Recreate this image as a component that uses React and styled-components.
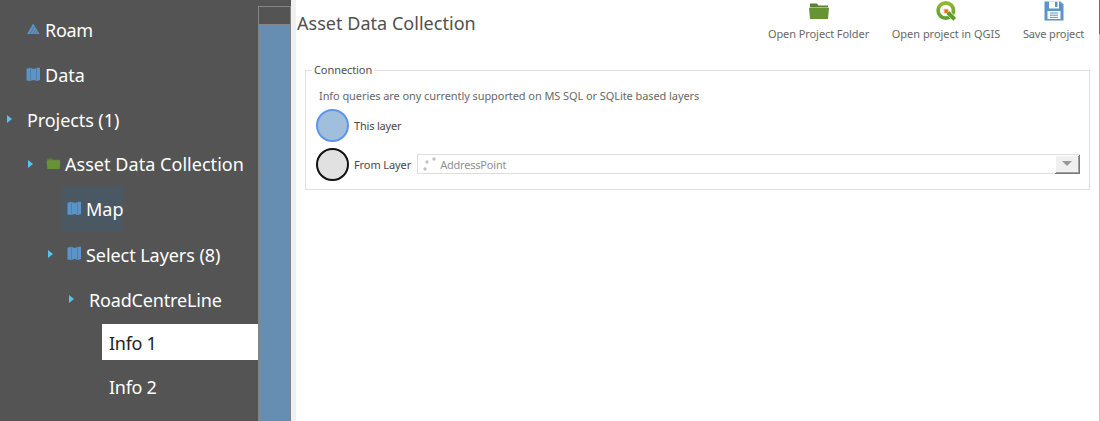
import React from "react";
import styled, { createGlobalStyle } from "styled-components";

const Global = createGlobalStyle`
  * { box-sizing: border-box; }
  body { margin: 0; background: #fff; font-family: "Noto Sans", "Open Sans", sans-serif; }
`;
const Window = styled.div`
  display: flex; width: 1100px; height: 421px; overflow: hidden; background: #fff;
`;
const Tree = styled.nav`
  width: 258px; height: 421px; padding-top: 7px; background: #545454; flex: none; overflow: hidden;
`;
const Row = styled.div`
  display: flex; align-items: center; height: ${p => p.$h || 45}px; padding-left: ${p => p.$indent}px;
`;
const Arrow = styled.span`
  width: 0; height: 0; margin-right: ${p => p.$gap}px; margin-top: -1px;
  border: solid transparent; border-width: 4.5px 0 4.5px 5px; border-left-color: #56c5ee;
`;
const Entry = styled.div`
  display: flex; align-items: center; height: 45px; width: ${p => (p.$hover ? "61px" : "auto")};
  padding-left: ${p => (p.$hover ? 5 : 0)}px; background: ${p => (p.$hover ? "#4a5863" : "transparent")};
  svg { flex: none; margin: -1px 4px 0 0; }
`;
const Label = styled.span`
  font-size: 18px; line-height: 24px; margin-top: ${p => (p.$raised ? -1 : 1)}px; color: #fff; white-space: nowrap;
  letter-spacing: ${p => p.$track || 0}px;
`;
const Selected = styled.div`
  display: flex; align-items: center; width: 157px; height: 36px; padding-left: 7px; background: #fff;
  ${Label} { color: #222; }
`;
const Scrollbar = styled.div`
  width: 33px; height: 421px; flex: none; padding-top: 6px; background: #545454;
  display: flex; flex-direction: column;
`;
const ScrollCap = styled.div`
  height: 18px; border: 1px solid #858585; border-bottom: 0;
`;
const ScrollThumb = styled.div`
  flex: 1; background: #668db2; border: 1px solid #858585; border-width: 1px 1px 0;
`;
const Gutter = styled.div`
  width: 5px; flex: none; background: #f0f0f0;
`;
const Main = styled.main`
  flex: 1; min-width: 0; height: 421px; display: flex; flex-direction: column;
`;
const Edge = styled.div`
  width: 1px; flex: none; background: linear-gradient(#6c6c6c 34px, #c8c8c8 34px);
`;
const Header = styled.header`
  display: flex; justify-content: space-between; height: 63px; padding: 0 15px 0 1px;
`;
const Title = styled.h1`
  margin: 11px 0 0; font-size: 18px; line-height: 25px; font-weight: 400; color: #505050; letter-spacing: 0.03px;
`;
const Actions = styled.div`
  display: flex; gap: 23px;
`;
const Action = styled.div`
  display: flex; flex-direction: column; align-items: center; width: ${p => p.$w}px;
  svg { display: block; height: 22px; width: 22px; }
`;
const Small = styled.span`
  font-size: 11px; line-height: 16px; white-space: nowrap; color: ${p => p.$color || "#686868"};
  letter-spacing: ${p => p.$track ?? -0.08}px;
`;
const ActionText = styled(Small)`
  margin-top: 4px;
`;
const Group = styled.fieldset`
  margin: 0 9px; padding: 0 9px 0 10px; height: 127px; min-width: 0; border: 1px solid #e1e1e1;
`;
const Legend = styled.legend`
  padding: 0 2px; margin-left: -4px; height: 14px; display: flex; align-items: center;
`;
const Hint = styled.div`
  height: 32px; padding: 11px 0 0 3px; display: flex;
`;
const Option = styled.div`
  display: flex; align-items: center; height: ${p => p.$h}px;
`;
const Radio = styled.span`
  width: 33px; height: 33px; flex: none; border-radius: 50%; margin-right: 5px;
  border: 2px solid ${p => (p.$on ? "#5f93f0" : "#111")}; background: ${p => (p.$on ? "#9fbfdc" : "#e1e1e1")};
`;
const Combo = styled.div`
  display: flex; align-items: center; flex: 1; height: 20px; margin: -1px 0 0 6px; padding-left: 4px;
  border: 1px solid #dedede; border-right: 0;
  svg { margin-right: 2px; }
  ${Small} { margin-top: 2px; }
`;
const DropButton = styled.span`
  width: 25px; height: 19px; margin: 0 0 0 auto; background: #f0f0f0; display: flex; align-items: center; justify-content: center;
  border: solid #777; border-width: 0 1px 1px 0; box-shadow: inset 1px 1px #fff, inset -1px -1px #a0a0a0;
  &::after { content: ""; border: solid transparent; border-width: 5px 5px 0; border-top-color: #999; }
`;

const MapIcon = () => (
  <svg width="15" height="15" viewBox="0 0 15 15">
    <path d="M.5 1.800 4.200 .8 7.700 2 11 .8 14 .8V13l-3 1-3.300-1-3.500 1L.5 13.500z" fill="#5b94c8" />
    <path d="M4.500 1v12.500M10.500 1v12.500" stroke="#4f7596" strokeWidth=".7" />
  </svg>
);
const RoamIcon = () => (
  <svg width="15" height="15" viewBox="0 0 15 15">
    <path d="M7.200 1.500 13.500 12H1z" fill="#5b94c8" />
    <path d="M4.200 12 8.400 4.500M7 12l2.600-4.500M9.500 12l1.500-2.500" stroke="#545454" strokeWidth=".5" />
  </svg>
);
const FolderIcon = () => (
  <svg width="15" height="15" viewBox="0 0 22 22">
    <path d="M2 3.500h7l1.500 2H20v2H2z" fill="#5a8130" />
    <path d="M1 8h20l-1 11H2z" fill="#679433" />
    <path d="M1.500 7.500h19" stroke="#a4bd88" strokeWidth=".7" />
  </svg>
);
const QgisIcon = () => (
  <svg viewBox="0 0 22 22">
    <defs>
      <linearGradient id="ring" x1="0" y1="0" x2="0" y2="1">
        <stop offset="0" stopColor="#8db92c" /><stop offset="1" stopColor="#5f9f2c" />
      </linearGradient>
    </defs>
    <circle cx="10.800" cy="10.500" r="7.700" fill="none" stroke="url(#ring)" strokeWidth="3.700" />
    <path d="m13.500 13 7.500 7.500" stroke="#fff" strokeWidth="5" />
    <path d="m12.800 12.500 6.900 6.900" stroke="#5d9c2b" strokeWidth="3.900" />
    <path d="M8.700 8.700h4.500l.6 2.500-2.300 2.300-2.800-.5z" fill="#f6b36b" />
    <path d="M9.800 9.800h3v3h-3z" fill="#e9662b" />
  </svg>
);
const SaveIcon = () => (
  <svg viewBox="0 0 22 22">
    <path d="M1.500 1.500h16l3 3v16h-19z" fill="#5b94c8" />
    <path d="M6 1.500h10v7H6zM4.500 11h13v8h-13z" fill="#fff" />
    <path d="M12 2h2.500v5H12z" fill="#5b94c8" />
    <path d="M7 13h8M7 15.200h8M7 17.400h8" stroke="#5b94c8" />
  </svg>
);
const PointsIcon = () => (
  <svg width="16" height="16" viewBox="0 0 16 16" fill="#c3c3c3">
    <circle cx="3" cy="13" r="1.700" /><circle cx="5" cy="6" r="1.700" /><circle cx="12" cy="3" r="1.700" />
  </svg>
);

export default function App() {
  return (
    <Window>
      <Global />
      <Tree>
        <Row $indent={26}><Entry><RoamIcon /><Label $track={-0.3}>Roam</Label></Entry></Row>
        <Row $indent={26}><Entry><MapIcon /><Label>Data</Label></Entry></Row>
        <Row $indent={7}><Arrow $gap={15} /><Label $track={-0.08}>Projects (1)</Label></Row>
        <Row $indent={28} $h={44}><Arrow $gap={13} /><Entry><FolderIcon /><Label $raised $track={0.04}>Asset Data Collection</Label></Entry></Row>
        <Row $indent={62}><Entry $hover><MapIcon /><Label>Map</Label></Entry></Row>
        <Row $indent={48} $h={46}><Arrow $gap={14} /><Entry><MapIcon /><Label $track={-0.06}>Select Layers (8)</Label></Entry></Row>
        <Row $indent={69} $h={44}><Arrow $gap={15} /><Label $track={-0.16}>RoadCentreLine</Label></Row>
        <Row $indent={102} $h={42}><Selected><Label $track={-0.3}>Info 1</Label></Selected></Row>
        <Row $indent={109} $h={48}><Label $raised $track={-0.3}>Info 2</Label></Row>
      </Tree>
      <Scrollbar><ScrollCap /><ScrollThumb /></Scrollbar>
      <Gutter />
      <Main>
        <Header>
          <Title>Asset Data Collection</Title>
          <Actions>
            <Action $w={101}><FolderIcon /><ActionText>Open Project Folder</ActionText></Action>
            <Action $w={108}><QgisIcon /><ActionText $track={-0.03}>Open project in QGIS</ActionText></Action>
            <Action $w={61}><SaveIcon /><ActionText $track={-0.14}>Save project</ActionText></Action>
          </Actions>
        </Header>
        <Group>
          <Legend><Small $color="#505050">Connection</Small></Legend>
          <Hint><Small>Info queries are ony currently supported on MS SQL or SQLite based layers</Small></Hint>
          <Option $h={33}><Radio $on /><Small $color="#484848" $track={-0.2}>This layer</Small></Option>
          <Option $h={45}>
            <Radio /><Small $color="#484848" $track={-0.1}>From Layer</Small>
            <Combo><PointsIcon /><Small $color="#909090" $track={-0.2}>AddressPoint</Small><DropButton /></Combo>
          </Option>
        </Group>
      </Main>
      <Edge />
    </Window>
  );
}
